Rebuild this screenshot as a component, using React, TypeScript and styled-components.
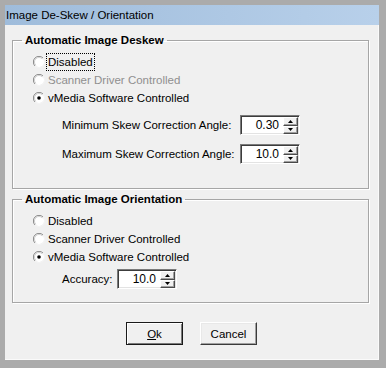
import React from "react";
import styled, { createGlobalStyle } from "styled-components";

const Global = createGlobalStyle`
  html, body { margin: 0; padding: 0; background: #ababab; }
  body { font-family: "Liberation Sans", Arial, sans-serif; font-size: 11.5px; color: #000; }
  * { box-sizing: border-box; }
`;

const Frame = styled.div`
  width: 386px;
  height: 368px;
  background: #ababab;
  padding: 5px 7px 8px 5px;
  display: flex;
  flex-direction: column;
`;

const TitleBar = styled.div`
  height: 20px;
  line-height: 20px;
  padding-left: 1px;
  background: linear-gradient(to right, #9fbcdb, #b8d0ea);
  font-size: 11.5px;
  color: #000;
  white-space: nowrap;
`;

const Body = styled.div`
  flex: 1;
  background: #f0f0f0;
  padding: 8px 10px 0 7px;
  display: flex;
  flex-direction: column;
  box-shadow: inset -1px -1px 0 #fafafa;
`;

const Group = styled.fieldset<{ $pb: number; $mt?: number }>`
  margin: ${(p) => p.$mt ?? 0}px 0 0 0;
  padding: 0 0 ${(p) => p.$pb}px 0;
  border: 1px solid #a6a6a6;
  box-shadow: 1px 1px 0 #ffffff, inset 1px 1px 0 #ffffff;
  min-width: 0;
`;

const Legend = styled.legend`
  margin-left: 9px;
  padding: 0 3px;
  font-weight: bold;
  font-size: 11.5px;
  line-height: 14px;
`;

const RadioList = styled.div`
  padding: 6px 0 0 20px;
  display: flex;
  flex-direction: column;
`;

const RadioRow = styled.div`
  height: 18px;
  display: flex;
  align-items: center;
  gap: 1px;
`;

const RadioLabel = styled.span<{ $focus?: boolean; $disabled?: boolean }>`
  height: 18px;
  line-height: 16px;
  padding: 0 1px;
  border: 1px dotted ${(p) => (p.$focus ? "#000" : "transparent")};
  color: ${(p) => (p.$disabled ? "#8f8f8f" : "#000")};
  white-space: nowrap;
`;

const SpinRow = styled.div<{ $mt: number; $ml: number }>`
  display: flex;
  align-items: center;
  margin: ${(p) => p.$mt}px 0 0 ${(p) => p.$ml}px;
  height: 20px;
`;

const SpinLabel = styled.span<{ $w: number }>`
  width: ${(p) => p.$w}px;
  white-space: nowrap;
`;

const Field = styled.div`
  width: 60px;
  height: 20px;
  display: flex;
  background: #fff;
  border: 1px solid;
  border-color: #7a7a7a #ffffff #ffffff #7a7a7a;
  box-shadow: inset 1px 1px 0 #3c3c3c, inset -1px -1px 0 #e3e3e3;
  padding: 2px 1px 1px 2px;
`;

const Value = styled.div`
  flex: 1;
  text-align: right;
  padding-right: 4px;
  font-size: 12px;
  line-height: 15px;
`;

const Spin = styled.div`
  width: 15px;
  display: flex;
  flex-direction: column;
  margin: -1px 0 -1px 0;
`;

const SpinBtn = styled.div`
  flex: 1;
  background: #f0f0f0;
  border: 1px solid;
  border-color: #ffffff #4a4a4a #4a4a4a #ffffff;
  box-shadow: inset -1px -1px 0 #a0a0a0;
  display: flex;
  align-items: center;
  justify-content: center;
`;

const ButtonRow = styled.div`
  display: flex;
  justify-content: center;
  gap: 17px;
  margin-top: 19px;
  padding-left: 2px;
`;

const Button = styled.div<{ $default?: boolean }>`
  width: 57px;
  height: 23px;
  display: flex;
  align-items: center;
  justify-content: center;
  background: #f0f0f0;
  font-size: 11.5px;
  border: 1px solid;
  border-color: ${(p) => (p.$default ? "#1a1a1a" : "#ffffff #3a3a3a #3a3a3a #ffffff")};
  box-shadow: ${(p) =>
    p.$default
      ? "inset 1px 1px 0 #ffffff, inset -1px -1px 0 #7a7a7a"
      : "inset -1px -1px 0 #a0a0a0, inset 1px 1px 0 #e8e8e8"};
`;

const U = styled.span`
  text-decoration: underline;
`;

function Radio({ checked }: { checked?: boolean }) {
  return (
    <svg width="12" height="12" viewBox="0 0 12 12" style={{ flex: "none" }}>
      <circle cx="6" cy="6" r="5" fill="#ffffff" />
      <path d="M 10 2 A 5.5 5.5 0 0 0 2 10" fill="none" stroke="#8a8a8a" strokeWidth="1" />
      <path d="M 9.2 2.8 A 4.5 4.5 0 0 0 2.8 9.2" fill="none" stroke="#d0d0d0" strokeWidth="1" />
      <path d="M 10 2 A 5.5 5.5 0 0 1 2 10" fill="none" stroke="#f4f4f4" strokeWidth="1" />
      {checked && <circle cx="6" cy="6" r="1.8" fill="#000" />}
    </svg>
  );
}

function Arrow({ up }: { up?: boolean }) {
  return (
    <svg width="5" height="3" viewBox="0 0 5 3">
      <path d={up ? "M0 3 L2.5 0 L5 3 Z" : "M0 0 L5 0 L2.5 3 Z"} fill="#000" />
    </svg>
  );
}

function SpinBox({ value }: { value: string }) {
  return (
    <Field>
      <Value>{value}</Value>
      <Spin>
        <SpinBtn>
          <Arrow up />
        </SpinBtn>
        <SpinBtn>
          <Arrow />
        </SpinBtn>
      </Spin>
    </Field>
  );
}

export default function App() {
  return (
    <>
      <Global />
      <Frame>
        <TitleBar>Image De-Skew / Orientation</TitleBar>
        <Body>
          <Group $pb={24}>
            <Legend>Automatic Image Deskew</Legend>
            <RadioList>
              <RadioRow>
                <Radio />
                <RadioLabel $focus>Disabled</RadioLabel>
              </RadioRow>
              <RadioRow>
                <Radio />
                <RadioLabel $disabled>Scanner Driver Controlled</RadioLabel>
              </RadioRow>
              <RadioRow>
                <Radio checked />
                <RadioLabel>vMedia Software Controlled</RadioLabel>
              </RadioRow>
            </RadioList>
            <SpinRow $mt={8} $ml={49}>
              <SpinLabel $w={178}>Minimum Skew Correction Angle:</SpinLabel>
              <SpinBox value="0.30" />
            </SpinRow>
            <SpinRow $mt={9} $ml={49}>
              <SpinLabel $w={178}>Maximum Skew Correction Angle:</SpinLabel>
              <SpinBox value="10.0" />
            </SpinRow>
          </Group>
          <Group $pb={13} $mt={3}>
            <Legend>Automatic Image Orientation</Legend>
            <RadioList>
              <RadioRow>
                <Radio />
                <RadioLabel>Disabled</RadioLabel>
              </RadioRow>
              <RadioRow>
                <Radio />
                <RadioLabel>Scanner Driver Controlled</RadioLabel>
              </RadioRow>
              <RadioRow>
                <Radio checked />
                <RadioLabel>vMedia Software Controlled</RadioLabel>
              </RadioRow>
            </RadioList>
            <SpinRow $mt={3} $ml={49}>
              <SpinLabel $w={55}>Accuracy:</SpinLabel>
              <SpinBox value="10.0" />
            </SpinRow>
          </Group>
          <ButtonRow>
            <Button $default>
              <span>
                <U>O</U>k
              </span>
            </Button>
            <Button>Cancel</Button>
          </ButtonRow>
        </Body>
      </Frame>
    </>
  );
}
